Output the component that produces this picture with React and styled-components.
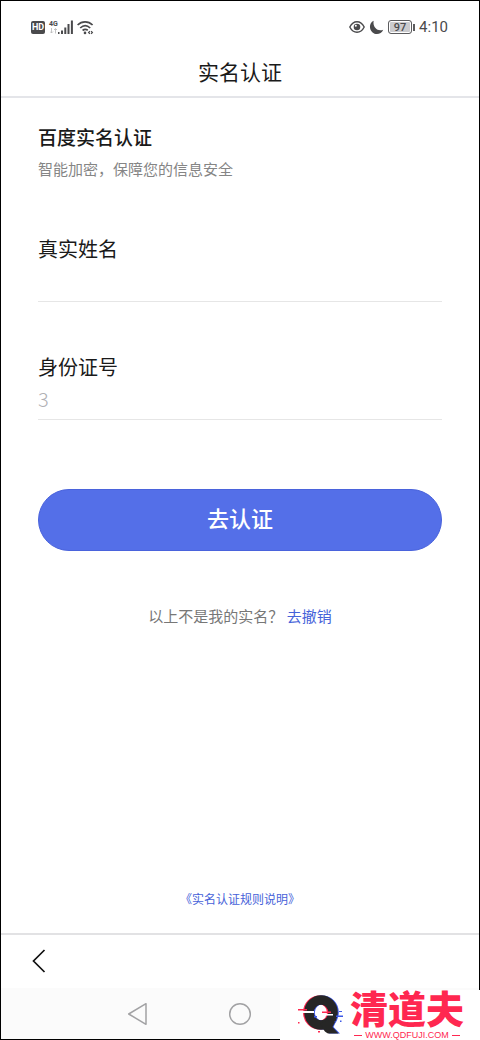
import styled, { createGlobalStyle } from "styled-components";

const GlobalStyle = createGlobalStyle`
  * {
    box-sizing: border-box;
  }
  body {
    margin: 0;
    background: #fff;
    color: #1a1a1a;
    font-family: "Noto Sans CJK SC", sans-serif;
  }
`;

const Screen = styled.div`
  position: relative;
  display: flex;
  flex-direction: column;
  min-height: 100vh;
  border: 1px solid #000;
  background: #fff;
`;

const StatusBar = styled.div`
  display: flex;
  align-items: center;
  justify-content: space-between;
  height: 52px;
  padding: 0 31px 0 30px;
  color: #4a4a4c;
  font-family: Roboto, sans-serif;
`;

const StatusGroup = styled.div`
  display: flex;
  align-items: center;
  gap: 4px;
`;

const HdBadge = styled.span`
  width: 14px;
  height: 13px;
  border-radius: 2px;
  background: #4a4a4c;
  color: #fff;
  font-size: 9px;
  font-weight: 700;
  line-height: 13px;
  text-align: center;
`;

const Signal = styled.div`
  display: flex;
  align-items: flex-end;
`;

const Network = styled.span`
  display: flex;
  flex-direction: column;
  align-items: center;
  width: 9px;
  font-size: 7px;
  font-weight: 700;
  line-height: 8px;
`;

const Battery = styled.span`
  display: flex;
  align-items: center;
  gap: 1px;

  &::after {
    content: "";
    width: 2px;
    height: 7px;
    background: #5c5c5e;
  }
`;

const BatteryLevel = styled.span`
  width: 24px;
  height: 14px;
  border: 1px solid #5c5c5e;
  border-radius: 3px;
  background: #cbcbce;
  box-shadow: inset 0 0 0 1px #fff;
  font-size: 11px;
  font-weight: 500;
  line-height: 13px;
  text-align: center;
`;

const Clock = styled.time`
  font-size: 15px;
  line-height: 20px;
`;

const Header = styled.header`
  padding: 1px 0 8px;
  border-bottom: 2px solid #e4e5e9;
`;

const Title = styled.h1`
  margin: 0;
  font-size: 21px;
  font-weight: 400;
  line-height: 34px;
  text-align: center;
`;

const Main = styled.main`
  display: flex;
  flex: 1;
  flex-direction: column;
  padding: 24px 37px;
`;

const Heading = styled.h2`
  margin: 0;
  font-size: 19px;
  font-weight: 500;
  line-height: 30px;
`;

const Desc = styled.p`
  margin: 5px 0 0;
  color: #858585;
  font-size: 15px;
  line-height: 24px;
`;

const Form = styled.form`
  display: flex;
  flex-direction: column;
  gap: 50px;
  margin-top: 53px;
`;

const Field = styled.div`
  display: flex;
  flex-direction: column;
`;

const Label = styled.label`
  font-size: 20px;
  line-height: 30px;
`;

const Input = styled.input`
  width: 100%;
  height: 38px;
  padding: 0 0 4px;
  border: 0;
  border-bottom: 1px solid #e6e6e6;
  border-radius: 0;
  outline: 0;
  background: transparent;
  font-family: "Noto Sans CJK SC", sans-serif;
  font-size: 20px;
  font-weight: 300;

  &::placeholder {
    color: #b0b0b4;
    opacity: 1;
  }
`;

const Submit = styled.button`
  height: 62px;
  margin-top: 19px;
  padding: 0 0 6px;
  border: 1px solid #4a63dc;
  border-radius: 31px;
  background: #546fe8;
  color: #fff;
  font-family: inherit;
  font-size: 22px;
  font-weight: 500;
  cursor: pointer;
`;

const Note = styled.p`
  margin: 53px 0 0;
  color: #777;
  font-size: 15px;
  line-height: 24px;
  text-align: center;
`;

const TextLink = styled.a`
  color: #4662d9;
  text-decoration: none;
`;

const Rules = styled.p`
  margin: auto 0 0;
  font-size: 12px;
  line-height: 20px;
  text-align: center;
`;

const Toolbar = styled.nav`
  display: flex;
  align-items: center;
  height: 55px;
  padding: 0 30px 2px;
  border-top: 2px solid #e2e2e4;
`;

const SystemBar = styled.div`
  display: flex;
  align-items: center;
  justify-content: center;
  gap: 78px;
  height: 51px;
  background: #fbfbfb;
`;

const IconButton = styled.button`
  display: flex;
  padding: 0;
  border: 0;
  background: none;
  color: ${(props) => props.$color};
  cursor: pointer;
`;

const Watermark = styled.div`
  position: absolute;
  right: -1px;
  bottom: -1px;
  display: flex;
  gap: 4px;
  width: 200px;
  height: 50px;
  padding-left: 16px;
  background: #fff;
  color: #ff2850;
`;

const Brand = styled.div`
  display: flex;
  flex-direction: column;
  align-items: center;
  gap: 5px;
`;

const BrandName = styled.strong`
  font-size: 38px;
  font-weight: 900;
  line-height: 34px;
`;

const BrandUrl = styled.span`
  display: flex;
  align-items: center;
  gap: 3px;
  font-family: "Liberation Sans", sans-serif;
  font-size: 9px;
  line-height: 12px;

  &::before,
  &::after {
    content: "";
    width: 8px;
    height: 1px;
    background: #ff2850;
  }
`;

const DataArrows = () => (
  <svg width="7" height="6" viewBox="0 0 7 6" fill="none" stroke="currentColor" opacity=".4" aria-hidden="true">
    <path d="M1.500 0v5M0 3.500 1.500 5 3 3.500M5.500 5.500V1M4 2 5.500.500 7 2" strokeWidth=".8" />
  </svg>
);

const SignalIcon = () => (
  <svg width="15" height="14" viewBox="0 0 15 14" fill="currentColor" aria-hidden="true">
    <path d="M0 12h1.500v2H0zM3 10.500h2V14H3zM6.300 7.500h2V14h-2zM9.500 4h2v10h-2zM12.900.5h2V14h-2z" />
  </svg>
);

const WifiIcon = () => (
  <svg width="17" height="15" viewBox="0 0 17 15" fill="none" stroke="currentColor" strokeWidth="1.700" aria-hidden="true">
    <path d="M.6 5C4.900.7 11.300.7 15.600 5" />
    <path d="M3.200 8C6.300 5 10.100 5 13.200 8" />
    <path d="M5.600 10.500C7.300 9 9 9 10.800 10.300" />
    <circle cx="8" cy="12.900" r="1.300" fill="currentColor" stroke="none" />
    <path d="m12.900 11.200-1.300 1.300 1.300 1.300m1.200-2.600 1.300 1.300-1.300 1.300" strokeWidth="1.200" />
  </svg>
);

const EyeIcon = () => (
  <svg width="16" height="14" viewBox="0 0 16 14" fill="none" stroke="currentColor" aria-hidden="true">
    <path d="M.8 7C2.600 3.400 5.100 1.700 8 1.700S13.400 3.400 15.200 7C13.400 10.600 10.900 12.300 8 12.300S2.600 10.600.8 7Z" strokeWidth="1.400" />
    <circle cx="8" cy="7" r="3.300" fill="currentColor" stroke="none" />
    <circle cx="6.800" cy="5.800" r="1" fill="#fff" stroke="none" />
  </svg>
);

const MoonIcon = () => (
  <svg width="15" height="15" viewBox="0 0 15 15" fill="currentColor" aria-hidden="true">
    <path d="M4.700.800C-.2 3 .1 9.300 3.300 12.200c3.500 3.200 9 2.200 10.900-2.500-3 1.300-6 .5-7.700-1.600C4.700 6 4.100 3.300 4.700.800Z" />
  </svg>
);

const ChevronIcon = () => (
  <svg width="16" height="24" viewBox="0 0 16 24" fill="none" stroke="currentColor" strokeWidth="1.700" aria-hidden="true">
    <path d="M13.500 1 2.500 12l11 11" />
  </svg>
);

const BackIcon = () => (
  <svg width="24" height="24" viewBox="0 0 24 24" fill="none" stroke="currentColor" strokeWidth="1.500" strokeLinejoin="round" aria-hidden="true">
    <path d="M20 1.700v20.600L2.700 12Z" />
  </svg>
);

const HomeIcon = () => (
  <svg width="24" height="24" viewBox="0 0 24 24" fill="none" stroke="currentColor" strokeWidth="1.500" aria-hidden="true">
    <circle cx="12" cy="12" r="10.300" />
  </svg>
);

const RecentIcon = () => (
  <svg width="24" height="24" viewBox="0 0 24 24" fill="none" stroke="currentColor" strokeWidth="1.500" aria-hidden="true">
    <rect x="2" y="2" width="20" height="20" rx="2" />
  </svg>
);

const QLogo = () => (
  <svg width="50" height="50" viewBox="0 0 50 50" aria-hidden="true">
    <g fill="none" strokeWidth="9">
      <ellipse cx="23.500" cy="22.500" rx="12" ry="12.500" stroke="#ff2850" />
      <ellipse cx="26.300" cy="22.500" rx="12" ry="12.500" stroke="#3d59e6" />
      <ellipse cx="25" cy="22.500" rx="12" ry="12.500" stroke="#262626" strokeWidth="9.500" />
    </g>
    <path d="m33 31 7 .5-2.500 5.500 6.500 6.500H33Z" fill="#3d59e6" />
    <path d="m24 33 12-4 3 3-2.500 5 6 6.500H32c-2.500-1-4-3-5-5Z" fill="#262626" />
    <path d="M2 19h9v1.500H2zM26 21.500h9V23h-9z" fill="#ff2850" />
    <path d="M7 21h11v2H7zM28 24h9v1.500h-9z" fill="#fff" />
    <path d="M18 26h3v1.500h-3zM40 25.500h7V27h-7z" fill="#3d59e6" />
    <path d="M2 32h1.500v1.500H2zM22 41h2v1.500h-2z" fill="#ff2850" />
    <path d="M43 21h3v1h-3zM44 30.500h1.500V32H44z" fill="#3d59e6" />
  </svg>
);

const App = () => {
  return (
    <>
      <GlobalStyle />
      <Screen>
        <StatusBar>
          <StatusGroup>
            <HdBadge>HD</HdBadge>
            <Signal>
              <Network>
                4G
                <DataArrows />
              </Network>
              <SignalIcon />
            </Signal>
            <WifiIcon />
          </StatusGroup>
          <StatusGroup>
            <EyeIcon />
            <MoonIcon />
            <Battery>
              <BatteryLevel>97</BatteryLevel>
            </Battery>
            <Clock>4:10</Clock>
          </StatusGroup>
        </StatusBar>

        <Header>
          <Title>实名认证</Title>
        </Header>

        <Main>
          <Heading>百度实名认证</Heading>
          <Desc>智能加密，保障您的信息安全</Desc>

          <Form onSubmit={(e) => e.preventDefault()}>
            <Field>
              <Label htmlFor="realName">真实姓名</Label>
              <Input id="realName" type="text" />
            </Field>
            <Field>
              <Label htmlFor="idNumber">身份证号</Label>
              <Input id="idNumber" type="text" placeholder="3" />
            </Field>
            <Submit type="submit">去认证</Submit>
          </Form>

          <Note>
            以上不是我的实名？ <TextLink href="#revoke">去撤销</TextLink>
          </Note>

          <Rules>
            <TextLink href="#rules">《实名认证规则说明》</TextLink>
          </Rules>
        </Main>

        <Toolbar>
          <IconButton type="button" aria-label="返回" $color="#111">
            <ChevronIcon />
          </IconButton>
        </Toolbar>

        <SystemBar>
          <IconButton type="button" aria-label="后退" $color="#a2a2a4">
            <BackIcon />
          </IconButton>
          <IconButton type="button" aria-label="主屏幕" $color="#a2a2a4">
            <HomeIcon />
          </IconButton>
          <IconButton type="button" aria-label="最近任务" $color="#a2a2a4">
            <RecentIcon />
          </IconButton>
        </SystemBar>

        <Watermark>
          <QLogo />
          <Brand>
            <BrandName>清道夫</BrandName>
            <BrandUrl>WWW.QDFUJI.COM</BrandUrl>
          </Brand>
        </Watermark>
      </Screen>
    </>
  );
};

export default App;
